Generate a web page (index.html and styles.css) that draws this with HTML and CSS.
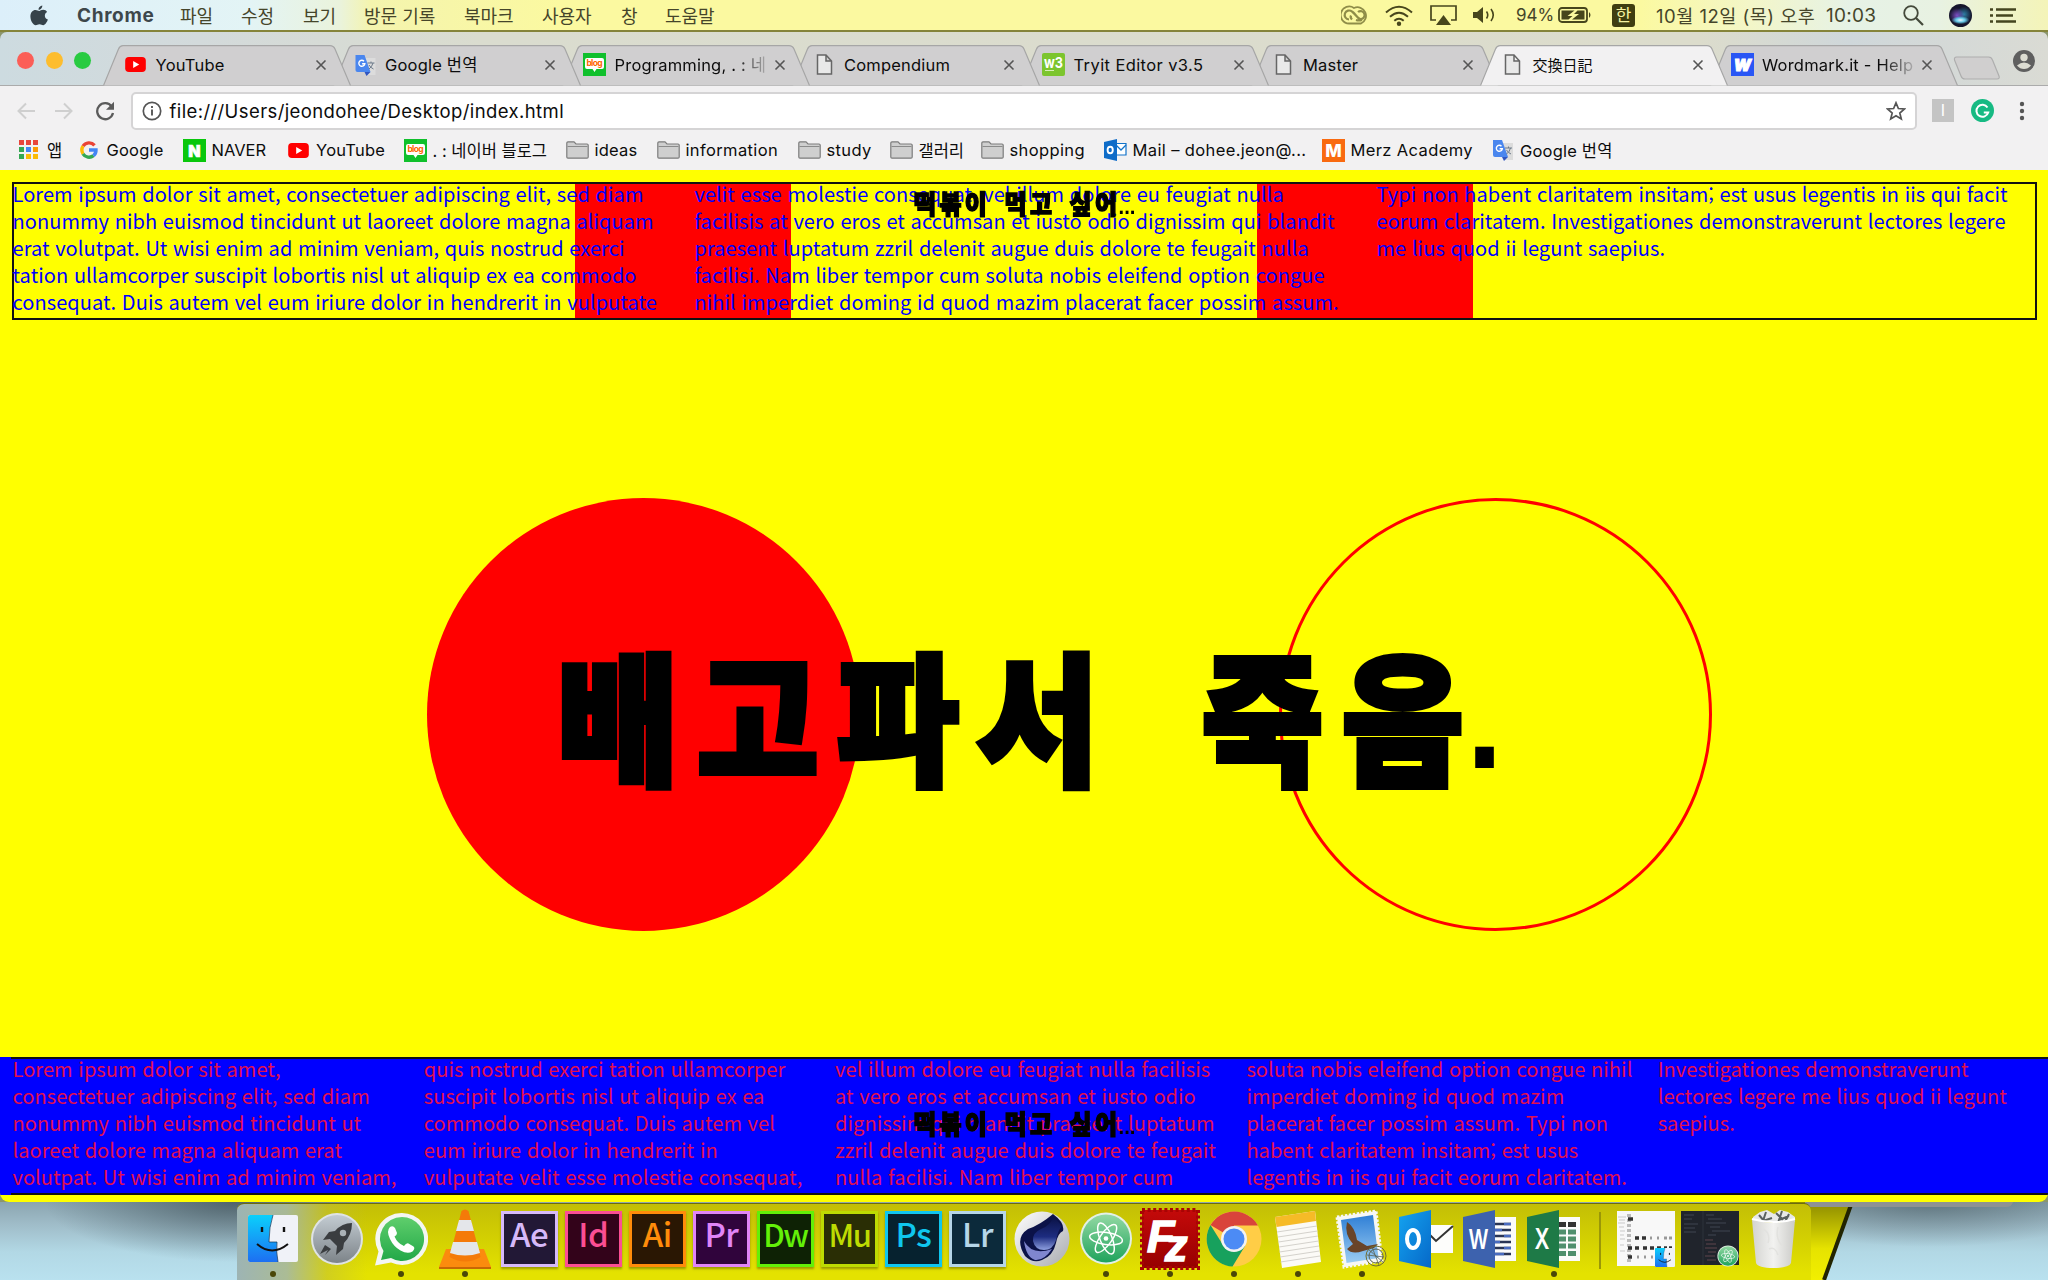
FILE: index.html
```html
<!DOCTYPE html>
<html lang="ko">
<head>
<meta charset="utf-8">
<title>交換日記</title>
<link rel="stylesheet" href="styles.css">
</head>
<body>
<svg width="0" height="0" class="defs">
  <defs>
    <symbol id="yt" viewBox="0 0 22 16"><rect width="22" height="16" rx="4" fill="#f00"/><path d="M8.5 4.2v7.6l6.5-3.8z" fill="#fff"/></symbol>
    <symbol id="translate" viewBox="0 0 22 22"><path d="M10 4h11v17h-8z" fill="#dcdcdc"/><path d="M1 1h9l6 17H3q-2 0-2-2z" fill="#4a86ee"/><path d="M10 18h6l-4 4z" fill="#2f55c0"/><path d="M13 9h7M16.500 7.500v1.500M18.500 9q-1 4-4 6M14.500 11q2 3 4.500 4" stroke="#6d7a8a" fill="none"/><path d="M9.500 7.200a3 3 0 1 0 .8 2.600H7.600" stroke="#fff" stroke-width="1.400" fill="none"/></symbol>
    <symbol id="blog" viewBox="0 0 23 23"><rect width="23" height="23" fill="#10c02c"/><path d="M4 5h15q2 0 2 2v7q0 2-2 2h-5.500l-2 3-2-3H4q-2 0-2-2V7q0-2 2-2z" fill="#fff"/><text x="11.500" y="13.300" text-anchor="middle" font-size="8.500" font-weight="700" fill="#f60" font-family="Inter, sans-serif" textLength="16">blog</text></symbol>
    <symbol id="doc" viewBox="0 0 16 21"><path d="M1 1h8.500L15 7v13H1zM9.500 1v6H15" fill="#e9e9e9" stroke="#666" stroke-width="1.500"/></symbol>
    <symbol id="folder" viewBox="0 0 23 18"><path d="M.8 16V2q0-1.200 1.200-1.200h6L10 3h11q1.200 0 1.200 1.200V16q0 1.200-1.200 1.200H2Q.8 17.200.8 16z" fill="#cfcfcf" stroke="#7c7c7c" stroke-width="1.200"/><path d="M1.500 5.500h20" stroke="#8b8b8b"/></symbol>
    <symbol id="x" viewBox="0 0 12 12"><path d="M1.500 1.500l9 9M10.500 1.500l-9 9" stroke="#555" stroke-width="1.600"/></symbol>
    <symbol id="shape" viewBox="0 0 248 41"><path d="M.5 40.500L15.500 4Q17 .6 20 .6H227Q230.500 .6 232 4L247.500 40.500"/></symbol>
    <symbol id="atom" viewBox="0 0 54 54"><circle cx="27" cy="27" r="26" fill="#e3f0e6"/><circle cx="27" cy="27" r="24" fill="url(#gAtom)"/><g fill="none" stroke="#fff" stroke-width="1.500"><ellipse cx="27" cy="27" rx="16.500" ry="6" transform="rotate(8 27 27)"/><ellipse cx="27" cy="27" rx="16.500" ry="6" transform="rotate(68 27 27)"/><ellipse cx="27" cy="27" rx="16.500" ry="6" transform="rotate(-55 27 27)"/></g><circle cx="27" cy="27" r="2.300" fill="#fff"/></symbol>
    <symbol id="finder" viewBox="0 0 50 47"><rect width="50" height="47" rx="2" fill="#f0f2f8"/><path d="M2 0h23q-4 12-4 27h8q-1 10 1 20H2q-2 0-2-2V2q0-2 2-2z" fill="url(#gFind)"/><path d="M25 0q-4 12-4 27h8q-1 10 1 20" fill="none" stroke="#135" stroke-width=".7"/><path d="M14 12v5M36 12v5" stroke="#111" stroke-width="2.400"/><path d="M9 29q15 13 31 0" fill="none" stroke="#111" stroke-width="2"/></symbol>
    <linearGradient id="gAtom" x2="0" y2="1"><stop offset="0" stop-color="#93d9a3"/><stop offset="1" stop-color="#1fa35c"/></linearGradient>
    <linearGradient id="gFind" x2="0" y2="1"><stop offset="0" stop-color="#0bd0fb"/><stop offset="1" stop-color="#1d6ff2"/></linearGradient>
    <linearGradient id="gRocket" x2="0" y2="1"><stop offset="0" stop-color="#c3ccd2"/><stop offset="1" stop-color="#7d8489"/></linearGradient>
    <linearGradient id="gWa" x2="0" y2="1"><stop offset="0" stop-color="#5fce6c"/><stop offset="1" stop-color="#22a848"/></linearGradient>
    <linearGradient id="gC4d" x2="0" y2="1"><stop offset="0" stop-color="#0a1245"/><stop offset=".6" stop-color="#1d2c80"/><stop offset="1" stop-color="#8ea0e0"/></linearGradient>
    <linearGradient id="gBall" x2="1" y2="1"><stop offset="0" stop-color="#fff"/><stop offset="1" stop-color="#a9abb0"/></linearGradient>
    <linearGradient id="gSky" x2="0" y2="1"><stop offset="0" stop-color="#2f7fd6"/><stop offset="1" stop-color="#9ccdf2"/></linearGradient>
    <linearGradient id="gOut" x2="1" y2="1"><stop offset="0" stop-color="#14a3f0"/><stop offset="1" stop-color="#0668c8"/></linearGradient>
    <linearGradient id="gTrash" x2="1" y2="0"><stop offset="0" stop-color="#d3d3d0"/><stop offset=".5" stop-color="#f2f2f0"/><stop offset="1" stop-color="#cbcbc8"/></linearGradient>
    <linearGradient id="gFz" x2="0" y2="1"><stop offset="0" stop-color="#c40a0a"/><stop offset="1" stop-color="#960000"/></linearGradient>
    <linearGradient id="gPeek" x2="0" y2="1"><stop offset="0" stop-color="#8c8a00"/><stop offset=".6" stop-color="#e6e300"/><stop offset="1" stop-color="#f2ef00"/></linearGradient>
  </defs>
</svg>

<header class="menubar">
  <svg class="apple" width="18" height="21" viewBox="0 0 18 21"><path d="M12.300.4c.2 2-1.600 4.300-3.700 4.300C8.300 2.700 10.300.6 12.300.4zM9.200 6c1 0 2.100-1.200 4-1.200 1.700 0 3.100.9 3.900 2.100-3.400 2-2.800 6.400.8 7.700-.9 2.500-2.700 5.600-4.600 5.600-1.500 0-2-.9-3.800-.9s-2.400.9-3.800.9C3.300 20.200.4 15.600.4 11.400c0-4 2.500-6.400 5-6.400C7.100 5 8.400 6 9.200 6z" fill="#36424a"/></svg>
  <b class="app">Chrome</b>
  <span>파일</span><span>수정</span><span>보기</span><span>방문 기록</span><span>북마크</span><span>사용자</span><span>창</span><span>도움말</span>
  <svg width="28" height="20" viewBox="0 0 28 20"><path d="M8 18.500A8.500 8.500 0 1 1 13 3a8.500 8.500 0 1 1 7 15.500z" fill="none" stroke="#8f8d48" stroke-width="1.800"/><path d="M8 14.500a4.500 4.500 0 1 1 3-8q2 1.500 4 4t4 3.500a4 4 0 1 0-2-7M11 14.500q-2-2-1-4M15 15q3 1 6 0" fill="none" stroke="#8f8d48" stroke-width="2.200"/></svg>
  <svg width="28" height="21" viewBox="0 0 28 21"><g fill="none" stroke="#47461c" stroke-width="2"><path d="M1 7.500q13-11.500 26 0M5 11.800q9-8 18 0M9.300 15.800q4.700-4 9.400 0"/></g><circle cx="14" cy="18.700" r="2.200" fill="#47461c"/></svg>
  <svg width="27" height="20" viewBox="0 0 27 20"><path d="M6 15H1V1h25v14h-5" fill="none" stroke="#47461c" stroke-width="1.700"/><path d="M13.500 10l7.500 10H6z" fill="#47461c"/></svg>
  <svg width="25" height="18" viewBox="0 0 25 18"><path d="M1 6h4l6-5v16l-6-5H1z" fill="#47461c"/><path d="M14.500 5.500q2.500 3.500 0 7M19 3q4.500 6 0 12" fill="none" stroke="#47461c" stroke-width="1.600"/></svg>
  <span class="pct">94%</span>
  <svg width="34" height="16" viewBox="0 0 34 16"><rect x="1" y="1" width="28" height="14" rx="3" fill="none" stroke="#47461c" stroke-width="1.800"/><path d="M3.500 3.500h13l-7 5.500h5l-4 3.500h-7zM26.500 12.500H14L21 7h-5l3.500-3.500h7z" fill="#47461c"/><path d="M31 5q3 3 0 6z" fill="#47461c"/></svg>
  <span class="ime">한</span>
  <span class="date">10월 12일 (목) 오후</span><span class="time">10:03</span>
  <svg width="21" height="21" viewBox="0 0 21 21"><circle cx="8" cy="8" r="6.800" fill="none" stroke="#44493a" stroke-width="1.800"/><path d="M13 13l7 7" stroke="#44493a" stroke-width="2.200"/></svg>
  <span class="siri"></span>
  <svg width="26" height="15" viewBox="0 0 26 15"><path d="M0 1.500h3M6 1.500h20M0 7.500h3M6 7.500h17M0 13.500h3M6 13.500h20" stroke="#44451f" stroke-width="2.400"/></svg>
</header>

<div class="browser">
  <div class="tabstrip">
    <div class="lights"><i class="red"></i><i class="amber"></i><i class="green"></i></div>
    <nav class="tabs">
      <div class="tab z7"><svg class="bg"><use href="#shape"/></svg><svg class="fav" width="21" height="15"><use href="#yt"/></svg><span class="t">YouTube</span><svg class="x"><use href="#x"/></svg></div>
      <div class="tab z6"><svg class="bg"><use href="#shape"/></svg><svg class="fav" width="22" height="22"><use href="#translate"/></svg><span class="t">Google 번역</span><svg class="x"><use href="#x"/></svg></div>
      <div class="tab z5"><svg class="bg"><use href="#shape"/></svg><svg class="fav" width="23" height="23"><use href="#blog"/></svg><span class="t fade">Programming, . : 네</span><svg class="x"><use href="#x"/></svg></div>
      <div class="tab z4"><svg class="bg"><use href="#shape"/></svg><svg class="fav" width="16" height="21"><use href="#doc"/></svg><span class="t">Compendium</span><svg class="x"><use href="#x"/></svg></div>
      <div class="tab z3"><svg class="bg"><use href="#shape"/></svg><svg class="fav" width="23" height="23" viewBox="0 0 23 23"><rect width="23" height="23" rx="2" fill="#7cc52e"/><text x="2" y="15" font-family="Inter, sans-serif" font-weight="700" font-size="15" fill="#fff" textLength="19" lengthAdjust="spacingAndGlyphs">w3</text><path d="M3 17.500h9" stroke="#d6efb5"/></svg><span class="t wide">Tryit Editor v3.5</span><svg class="x"><use href="#x"/></svg></div>
      <div class="tab z2"><svg class="bg"><use href="#shape"/></svg><svg class="fav" width="16" height="21"><use href="#doc"/></svg><span class="t">Master</span><svg class="x"><use href="#x"/></svg></div>
      <div class="tab active"><svg class="bg"><use href="#shape"/></svg><svg class="fav" width="16" height="21"><use href="#doc"/></svg><span class="t jp">交換日記</span><svg class="x"><use href="#x"/></svg></div>
      <div class="tab z1"><svg class="bg"><use href="#shape"/></svg><svg class="fav" width="23" height="23" viewBox="0 0 23 23"><rect width="23" height="23" fill="#2956f5"/><text x="11.500" y="17.500" text-anchor="middle" font-family="Inter, sans-serif" font-weight="900" font-style="italic" font-size="16" fill="#fff" stroke="#fff">W</text></svg><span class="t fade">Wordmark.it - Help</span><svg class="x"><use href="#x"/></svg></div>
    </nav>
    <svg class="newtab" width="48" height="24" viewBox="0 0 48 24"><path d="M3.500 1h32q3 0 4 3l6.500 16q1 3-2 3H12q-3 0-4-3L1.500 4Q1 1 3.500 1z" fill="#d0cfcf" stroke="#aeaeae" stroke-width="1.200"/></svg>
    <svg class="profile" width="22" height="22" viewBox="0 0 22 22"><circle cx="11" cy="11" r="11" fill="#5f5f5f"/><circle cx="11" cy="7.500" r="3.700" fill="#dcdcd2"/><path d="M4 15.500q7-6 14 0-3 3.500-7 3.500t-7-3.500z" fill="#dcdcd2"/></svg>
  </div>

  <div class="toolbar">
    <svg width="18" height="18" viewBox="0 0 18 18"><path d="M18 9H1.500M9 1.500L1.500 9 9 16.500" fill="none" stroke="#cfcfcf" stroke-width="2"/></svg>
    <svg width="18" height="18" viewBox="0 0 18 18"><path d="M0 9h16.500M9 1.500L16.500 9 9 16.500" fill="none" stroke="#cfcfcf" stroke-width="2"/></svg>
    <svg width="20" height="20" viewBox="0 0 20 20"><path d="M16.700 5.500A8 8 0 1 0 18 12" fill="none" stroke="#5b5b5b" stroke-width="2.300"/><path d="M19 .8v8h-8z" fill="#5b5b5b"/></svg>
    <div class="omnibox">
      <svg width="20" height="20" viewBox="0 0 20 20"><circle cx="10" cy="10" r="8.700" fill="none" stroke="#555" stroke-width="1.700"/><path d="M10 8.500v6M10 5v2" stroke="#555" stroke-width="1.900"/></svg>
      <span class="url">file:///Users/jeondohee/Desktop/index.html</span>
      <svg width="20" height="20" viewBox="0 0 20 20"><path d="M10 1.800l2.400 5.700 6.100.5-4.700 4 1.500 6L10 14.700 4.700 18l1.500-6-4.700-4 6.100-.5z" fill="none" stroke="#555" stroke-width="1.700"/></svg>
    </div>
    <span class="ext">I</span>
    <svg width="23" height="23" viewBox="0 0 23 23"><circle cx="11.500" cy="11.500" r="11.500" fill="#17ba83"/><path d="M16.500 8.500a6 6 0 1 0 .7 5h-4.400" fill="none" stroke="#fff" stroke-width="2"/></svg>
    <svg width="6" height="20" viewBox="0 0 6 20"><circle cx="3" cy="3" r="2.200" fill="#555"/><circle cx="3" cy="10" r="2.200" fill="#555"/><circle cx="3" cy="17" r="2.200" fill="#555"/></svg>
  </div>

  <div class="bookmarks">
    <svg width="20" height="20" viewBox="0 0 20 20"><path d="M0 0h5v5H0zM7 0h5v5H7zM14 0h5v5h-5z" fill="#e8453c"/><path d="M0 7h5v5H0z" fill="#35a853"/><path d="M7 7h5v5H7z" fill="#4285f4"/><path d="M14 7h5v5h-5z" fill="#fb9a05"/><path d="M0 14h5v5H0z" fill="#35a853"/><path d="M7 14h5v5H7zM14 14h5v5h-5z" fill="#fbbc05"/></svg><span>앱</span>
    <svg width="18" height="18" viewBox="0 0 18 18"><g fill="none" stroke-width="3.400"><path d="M14.500 4.300A7.200 7.200 0 0 0 3 5.200" stroke="#ea4335"/><path d="M3 5.200a7.300 7.300 0 0 0 0 7.600" stroke="#fbbc05"/><path d="M3 12.800a7.200 7.200 0 0 0 10.500 1.900" stroke="#34a853"/><path d="M13.500 14.700A7.200 7.200 0 0 0 16 9H9" stroke="#4285f4"/></g></svg><span class="w">Google</span>
    <svg width="23" height="23" viewBox="0 0 23 23"><rect width="23" height="23" fill="#09c70c"/><text x="11.500" y="17.500" text-anchor="middle" font-family="Inter, sans-serif" font-weight="900" font-size="16" fill="#fff" stroke="#fff" stroke-width=".6">N</text></svg><span>NAVER</span>
    <svg width="21" height="15"><use href="#yt"/></svg><span class="w">YouTube</span>
    <svg width="23" height="23"><use href="#blog"/></svg><span>. : 네이버 블로그</span>
    <svg width="23" height="18"><use href="#folder"/></svg><span class="w">ideas</span>
    <svg width="23" height="18"><use href="#folder"/></svg><span class="w2">information</span>
    <svg width="23" height="18"><use href="#folder"/></svg><span class="w2">study</span>
    <svg width="23" height="18"><use href="#folder"/></svg><span>갤러리</span>
    <svg width="23" height="18"><use href="#folder"/></svg><span class="w2">shopping</span>
    <svg width="23" height="22" viewBox="0 0 23 22"><path d="M11 4.500h11V16H11z" fill="#fff" stroke="#1273c9" stroke-width="1.200"/><path d="M12 6l5 5 5-5" fill="none" stroke="#1273c9" stroke-width="1.300"/><path d="M0 3L13 0v22L0 19z" fill="#0f6cc8"/><ellipse cx="6.200" cy="11" rx="2.600" ry="3.300" fill="none" stroke="#fff" stroke-width="1.900"/></svg><span class="w2">Mail – dohee.jeon@...</span>
    <svg width="23" height="23" viewBox="0 0 23 23"><rect width="23" height="23" fill="#f96a10"/><text x="11.500" y="17.800" text-anchor="middle" font-family="Inter, sans-serif" font-weight="800" font-size="17.500" fill="#fff">M</text></svg><span class="w2">Merz Academy</span>
    <svg width="22" height="22"><use href="#translate"/></svg><span class="w">Google 번역</span>
  </div>

  <main class="page">
    <section class="top-box">
      <i class="bar b1"></i><i class="bar b2"></i>
      <p>Lorem ipsum dolor sit amet, consectetuer adipiscing elit, sed diam<br>nonummy nibh euismod tincidunt ut laoreet dolore magna aliquam<br>erat volutpat. Ut wisi enim ad minim veniam, quis nostrud exerci<br>tation ullamcorper suscipit lobortis nisl ut aliquip ex ea commodo<br>consequat. Duis autem vel eum iriure dolor in hendrerit in vulputate</p>
      <p>velit esse molestie consequat, vel illum dolore eu feugiat nulla<br>facilisis at vero eros et accumsan et iusto odio dignissim qui blandit<br>praesent luptatum zzril delenit augue duis dolore te feugait nulla<br>facilisi. Nam liber tempor cum soluta nobis eleifend option congue<br>nihil imperdiet doming id quod mazim placerat facer possim assum.</p>
      <p>Typi non habent claritatem insitam; est usus legentis in iis qui facit<br>eorum claritatem. Investigationes demonstraverunt lectores legere<br>me lius quod ii legunt saepius.</p>
      <h2 class="craving">떡볶이 먹고 싶어<span>...</span></h2>
    </section>
    <section class="stage">
      <i class="disc"></i><i class="ring"></i>
      <h1 class="headline">배고파서 죽음<span>.</span></h1>
    </section>
    <section class="bottom-box">
      <p>Lorem ipsum dolor sit amet,<br>consectetuer adipiscing elit, sed diam<br>nonummy nibh euismod tincidunt ut<br>laoreet dolore magna aliquam erat<br>volutpat. Ut wisi enim ad minim veniam,</p>
      <p>quis nostrud exerci tation ullamcorper<br>suscipit lobortis nisl ut aliquip ex ea<br>commodo consequat. Duis autem vel<br>eum iriure dolor in hendrerit in<br>vulputate velit esse molestie consequat,</p>
      <p>vel illum dolore eu feugiat nulla facilisis<br>at vero eros et accumsan et iusto odio<br>dignissim qui blandit praesent luptatum<br>zzril delenit augue duis dolore te feugait<br>nulla facilisi. Nam liber tempor cum</p>
      <p>soluta nobis eleifend option congue nihil<br>imperdiet doming id quod mazim<br>placerat facer possim assum. Typi non<br>habent claritatem insitam; est usus<br>legentis in iis qui facit eorum claritatem.</p>
      <p>Investigationes demonstraverunt<br>lectores legere me lius quod ii legunt<br>saepius.</p>
      <h2 class="craving">떡볶이 먹고 싶어<span>...</span></h2>
    </section>
  </main>
</div>

<footer class="desktop">
  <svg class="wall" width="2048" height="78" viewBox="0 0 2048 78"><path d="M1790 0h62l-28 78h-34z" fill="url(#gPeek)"/><path d="M1852 0l-28 78" stroke="#222400" stroke-width="4"/><path d="M1805 0h208q-1 5-7 5H1805z" fill="#8e9293"/></svg>
  <div class="dock">
    <div class="app on"><svg width="50" height="47"><use href="#finder"/></svg></div>
    <div class="app"><svg width="54" height="54" viewBox="0 0 54 54"><circle cx="27" cy="27" r="26" fill="#dfe3e5"/><circle cx="27" cy="27" r="24" fill="url(#gRocket)"/><path d="M42 11q-10 0-17 8l-6 1-6 8 7-1 7 7-1 9 7-6 1-6q8-8 8-20zM15 33l-5 9 8-4-3 5 6-6z" fill="#3a3d40"/><circle cx="33" cy="21" r="3.200" fill="#a9b1b6"/></svg></div>
    <div class="app on"><svg width="54" height="54" viewBox="0 0 54 54"><path d="M28 1a26 26 0 1 1-11 49.500L1 53.500l3.500-14A26 26 0 0 1 28 1z" fill="#f4f6f2"/><path d="M28 5a22 22 0 1 1-11 41L7 48l2.500-9A22 22 0 0 1 28 5z" fill="url(#gWa)"/><path d="M16 15q3-2 5 1l2 5q0 2-2.500 3.500 3 7 9.500 9.500 2.500-3.500 4.500-2.500l5 3q2 2-1 5-5 3-12-1T16 27q-4-8 0-12z" fill="#fff"/></svg></div>
    <div class="app on"><svg width="54" height="60" viewBox="0 0 54 60"><path d="M8 40h38l7 18q0 1-2 1H3q-2 0-2-1z" fill="#fb8b0e"/><path d="M1 58h52v2H1z" fill="#c76705"/><path d="M23.500 2q3.500-3 7 0l12 46q-15 9-31 0z" fill="#f47a09"/><path d="M21 11h12l3 11H18zM15 33h24l3 11q-15 5-30 0z" fill="#e4e6ea"/></svg></div>
    <div class="app"><span class="tile ae">Ae</span></div>
    <div class="app"><span class="tile id">Id</span></div>
    <div class="app"><span class="tile ai">Ai</span></div>
    <div class="app"><span class="tile pr">Pr</span></div>
    <div class="app"><span class="tile dw">Dw</span></div>
    <div class="app"><span class="tile mu">Mu</span></div>
    <div class="app"><span class="tile ps">Ps</span></div>
    <div class="app"><span class="tile lr">Lr</span></div>
    <div class="app"><svg width="56" height="58" viewBox="0 0 56 58"><circle cx="28" cy="29" r="27.500" fill="url(#gBall)"/><path d="M39 4q12 9 10 17-5 2-7 12-3 13-14 17-9 4-17-4Q0 28 14 19q12-4 25-15z" fill="#0b1248"/><path d="M10 31q8 15 28 8-8 12-17 11-9-3-11-19z" fill="#7f86cf"/><path d="M39 7q-2 8-12 12-9 4-8 12 2 9 11 9t12-10q2-9 5-13 0-4-8-10z" fill="url(#gC4d)"/></svg></div>
    <div class="app on"><svg width="54" height="57"><use href="#atom"/></svg></div>
    <div class="app on"><svg width="60" height="62" viewBox="0 0 60 62"><rect x="2" y="2" width="56" height="58" fill="url(#gFz)" stroke="#a80404" stroke-width="4" stroke-dasharray="3 2.600"/><text x="7" y="44" font-family="'Liberation Sans', sans-serif" font-weight="700" font-style="italic" font-size="45" fill="#fff" stroke="#fff" stroke-width="1.500">F</text><text x="25" y="53" font-family="'Liberation Sans', sans-serif" font-weight="700" font-style="italic" font-size="45" fill="#fff" stroke="#fff" stroke-width="1.500">z</text></svg></div>
    <div class="app on"><svg width="56" height="58" viewBox="0 0 56 56"><circle cx="28" cy="28" r="27.500" fill="#ffcd46"/><path d="M28 28L4.500 14A27.500 27.500 0 0 1 52 14.500H28z" fill="#d9443b"/><path d="M4.500 14a27.500 27.500 0 0 0 22 41.500L39 35 17 34z" fill="#17a15d"/><circle cx="28" cy="28" r="13" fill="#f2f2f2"/><circle cx="28" cy="28" r="10.500" fill="#4c8bf5"/></svg></div>
    <div class="app on"><svg width="50" height="60" viewBox="0 0 50 60"><path d="M2 8l40-6 6 51-39 6z" fill="#fbfaf6"/><path d="M2 8l40-6 1 10L3.500 18z" fill="#f6bb27"/><path d="M4 23l40-6M5 28l39.500-6M5.500 33L45 27M6 38l39.500-6M6.500 43L46 37M7 48l39.500-6M7.500 53L47 47" stroke="#d4d2cc" stroke-width="1"/></svg></div>
    <div class="app on"><svg width="56" height="60" viewBox="0 0 56 60"><path d="M3 8l39-6 6 50-38 6z" fill="#f7f7f5" stroke="#f7f7f5" stroke-width="3" stroke-dasharray="2.500 1.500"/><path d="M7 11l32-5 5.500 43-32 5z" fill="url(#gSky)"/><path d="M13 13q8 5 10 18l10 6 11-2-4 4-11 3q-11 4-16-2l6-5q-9-10-6-22z" fill="#694429"/><circle cx="42" cy="47" r="10" fill="none" stroke="#716d31" stroke-width="1"/><circle cx="42" cy="47" r="7" fill="none" stroke="#5b6153" stroke-width="1"/><path d="M34 40l16 14M33 46l17 2M38 38l7 18" stroke="#5b6153" stroke-width=".8"/></svg></div>
    <div class="app"><svg width="56" height="58" viewBox="0 0 56 58"><path d="M28 15h27v28H28z" fill="#fdfdfb"/><path d="M30 23l8 8 17-15" fill="none" stroke="#333" stroke-width="2"/><path d="M1 7L33 0v58L1 51z" fill="url(#gOut)"/><ellipse cx="15" cy="29" rx="6" ry="9" fill="none" stroke="#fff" stroke-width="4"/></svg></div>
    <div class="app"><svg width="56" height="58" viewBox="0 0 56 58"><path d="M28 7h26v44H28z" fill="#fbfbfb"/><path d="M30 14h19M30 20h19M30 26h19M30 32h19M30 38h19M30 44h19" stroke="#2a3555" stroke-width="2.300"/><path d="M42 14h7M30 20h10M42 26h7M30 32h8M42 38h7M30 44h12" stroke="#4a6cc0" stroke-width="2.300"/><path d="M1 7L33 0v58L1 51z" fill="#3d62ae"/><text x="16.500" y="39" text-anchor="middle" font-family="Inter, sans-serif" font-weight="600" font-size="27" fill="#fff" textLength="20" lengthAdjust="spacingAndGlyphs">W</text></svg></div>
    <div class="app on"><svg width="56" height="58" viewBox="0 0 56 58"><path d="M28 7h26v44H28z" fill="#fbfbfb"/><path d="M32 22h8M32 29h8M32 36h8M32 43.500h8M42 22h8M42 29h8M42 36h8M42 43.500h8" stroke="#4f8f6d" stroke-width="5"/><path d="M32 14.500h8M42 14.500h8" stroke="#333" stroke-width="5"/><path d="M1 7L33 0v58L1 51z" fill="#1e7a47"/><text x="16" y="39" text-anchor="middle" font-family="Inter, sans-serif" font-weight="600" font-size="28" fill="#fff" textLength="15" lengthAdjust="spacingAndGlyphs">X</text></svg></div>
    <i class="sep"></i>
    <div class="app"><svg width="58" height="56" viewBox="0 0 58 56"><rect width="58" height="55" fill="#f8f8f8"/><path d="M1 6h8M2 9h6M1 12h7M2 16h5M3 20h5M3 24h4M3 28h5M3 34h4M3 40h5" stroke="#c9c9c9"/><path d="M12 3v50" stroke="#bbb" stroke-width="4" stroke-dasharray="3 2"/><path d="M11 8h5M18 27h4M25 27h4M11 37h4M18 37h4M26 37h4M33 37h4M40 37h4M47 37h3M52 37h3M11 46h4" stroke="#333" stroke-width="3.500"/><path d="M33 27h2M40 27h2M47 27h3M52 27h3M20 46h2M27 46h2M34 46h2" stroke="#999" stroke-width="3"/><svg x="38" y="37" width="20" height="19"><use href="#finder"/></svg></svg></div>
    <div class="app"><svg width="60" height="58" viewBox="0 0 60 58"><rect x="1" y="1" width="58" height="54" fill="#20242c"/><path d="M4 5h10M4 9h8M4 14h14M4 18h11M4 22h12M26 5h8M28 9h14M26 13h20M30 17h10M32 21h18M28 25h8" stroke="#3f4550"/><path d="M25 30h8M26 34h10M25 38h12M28 42h8M25 46h10M27 50h9" stroke="#5f444c"/><path d="M23 1v54" stroke="#2d323b"/><svg x="37" y="35" width="22" height="22"><use href="#atom"/></svg></svg></div>
    <div class="app"><svg width="46" height="60" viewBox="0 0 46 60"><path d="M2 8l7-5 7-2 7 4 6-4 8 2 7 5v5H2z" fill="#e7e8e8"/><path d="M8 6l5 6M15 3l-3 9 9-3M25 4l7 7M31 2l-3 9 10-4M38 5l-4 8" stroke="#59605f" stroke-width="2" fill="none"/><path d="M1 11q22 5 43 0l-4 43q-2 5-17.500 5T5 54z" fill="url(#gTrash)"/><path d="M1 10q22 6 43 0" fill="none" stroke="#fff" stroke-width="2"/><path d="M12 20q8 4 5 14M27 18q-3 12 5 20M18 40q6-3 9 6" stroke="#e2e2df" fill="none" stroke-width="1.500"/></svg></div>
  </div>
</footer>
</body>
</html>
```

FILE: styles.css
```css
* { box-sizing: border-box; }
body {
  margin: 0;
  width: 2048px;
  height: 1280px;
  overflow: hidden;
  display: flex;
  flex-direction: column;
  font-family: Inter, "Noto Sans CJK KR", sans-serif;
  color: #0c0c0c;
  background: #8c966c;
}
.defs { position: absolute; }
svg { flex: none; }

/* menu bar */
.menubar {
  height: 32px;
  flex: none;
  display: grid;
  grid-template-columns: 47px 103px 61px 62px 61px 100px 78px 79px 44px 676px 44px 45px 42px 44px 42px 54px 44px 170px 77px 46px 41px 60px;
  padding: 0 0 0 30px;
  align-items: center;
  white-space: nowrap;
  font-size: 18px;
  color: #45452a;
  border-bottom: 2px solid #85843a;
  background: linear-gradient(90deg, #dceffa 0, #e3f4f5 250px, #eaf3dc 340px, #f4f4ae 370px, #fbf9a0 560px, #fbf9a0 1640px, #f3f6c8 1750px, #e6f2e6 1850px, #e8f2e2 1940px, #f4f4b8 2048px);
}
.menubar .app { font-size: 19px; color: #3d474b; letter-spacing: .65px; }
.pct { font-size: 17px; }
.date { font-size: 18.500px; letter-spacing: .5px; }
.time { font-size: 19px; letter-spacing: .3px; }
.ime {
  width: 23px; height: 23px; border-radius: 3px;
  background: #3f3e10; color: #f5f3a0;
  font-size: 17px; line-height: 22px; text-align: center;
}
.siri {
  width: 23px; height: 23px; border-radius: 50%;
  background: radial-gradient(ellipse 9px 4px at 50% 70%, #e8f2ff 0, #63c9e8 50%, transparent 100%), radial-gradient(circle at 35% 50%, #7c4fc4 0, transparent 40%), radial-gradient(circle at 65% 45%, #2c7fa5 0, transparent 40%), #15152c;
}

/* browser window */
.browser { height: 1170px; flex: none; display: flex; flex-direction: column; border-radius: 7px 7px 9px 9px; overflow: hidden; position: relative; z-index: 1; }
.tabstrip {
  height: 54px; flex: none;
  display: flex;
  align-items: flex-end;
  padding-left: 17px;
  border-bottom: 1px solid #ababab;
  background: linear-gradient(90deg, #cddbe0 0, #d3dadb 200px, #dadccf 480px, #dcdccc 1700px, #cfd7da 1850px, #dadbd4 2048px);
}
.lights { width: 86px; height: 33px; flex: none; display: flex; gap: 11.500px; }
.lights i { width: 17px; height: 17px; border-radius: 50%; }
.red { background: #fb5e57; } .amber { background: #fdbd2e; } .green { background: #28cb41; }
.tabs { display: flex; flex: none; height: 41px; margin-bottom: -1px; }
.tab { width: 248px; margin-right: -18.500px; height: 41px; position: relative; display: flex; align-items: center; padding: 0 0 2px 21px; font-size: 16.500px; }
.bg { position: absolute; left: 0; top: 0; width: 248px; height: 41px; z-index: -1; fill: #d0cfd0; stroke: #a6a6a6; stroke-width: 1.200; }
.fav { width: 23px; }
.t { width: 154px; margin-left: 8.500px; white-space: nowrap; line-height: 26px; letter-spacing: .2px; }
.t.wide { letter-spacing: .4px; }
.t.jp { font-family: "Noto Sans CJK JP", sans-serif; font-size: 15px; letter-spacing: 0; }
.fade { -webkit-mask-image: linear-gradient(90deg, #000 120px, transparent 158px); mask-image: linear-gradient(90deg, #000 120px, transparent 158px); }
.x { width: 12px; height: 12px; margin-left: 5px; }
.z7 { z-index: 7; } .z6 { z-index: 6; } .z5 { z-index: 5; } .z4 { z-index: 4; } .z3 { z-index: 3; } .z2 { z-index: 2; } .z1 { z-index: 1; }
.tab.active { z-index: 9; }
.active .bg { fill: #f2f1f2; }
.newtab { margin: 0 0 5px 14px; }
.profile { margin: 0 0 13px 11.500px; }

.toolbar {
  height: 49px; flex: none;
  display: grid;
  grid-template-columns: 38px 40px 36px 1801px 39px 48px auto;
  align-items: center;
  padding-left: 17px;
  background: #f2f1f2;
}
.omnibox { width: 1786px; height: 38px; border: 2px solid #d5d4d5; border-radius: 5px; background: #fff; display: flex; align-items: center; padding: 0 9px; }
.url { flex: 1; margin-left: 7.500px; padding-top: 1px; font-size: 18.500px; letter-spacing: .4px; }
.ext { width: 22px; height: 23px; background: #c4c4c4; color: #fff; font-size: 16px; line-height: 23px; text-align: center; }

.bookmarks {
  height: 35px; flex: none;
  display: grid;
  grid-template-columns: 28px 33px 26.500px 76.500px 28.500px 76px 28.500px 87.500px 29px 133px 29px 62px 29px 112px 29px 63px 29px 62px 29px 94px 29px 189px 29px 141px 28.500px auto;
  align-items: center;
  padding: 0 0 5px 19px;
  background: #f2f1f2;
  white-space: nowrap;
  font-size: 16.500px;
}
.w { letter-spacing: .2px; }
.w2 { letter-spacing: .37px; }

/* page shown in the browser */
.page {
  flex: 1;
  background: #ff0;
  display: flex;
  flex-direction: column;
  font-family: "Noto Sans CJK KR", sans-serif;
  font-size: 20px;
  line-height: 27.100px;
  letter-spacing: .06px;
}
.page p { margin: 0; white-space: nowrap; }
.top-box {
  position: relative;
  height: 138px;
  margin: 12px 11px 0 11.500px;
  border: 2px solid #111;
  display: grid;
  grid-template-columns: 682px 682px 1fr;
  color: #00f;
  flex: none;
}
.top-box p { position: relative; margin: -4px 0 0 -1px; }
.bar { position: absolute; top: 0; bottom: 0; width: 216px; background: #f00; }
.b1 { left: 561px; } .b2 { left: 1243.500px; }
.stage { flex: 1; position: relative; display: flex; align-items: center; padding: 0 0 61px 427px; gap: 419px; }
.disc, .ring { width: 433px; height: 433px; border-radius: 50%; position: relative; top: 56.500px; }
.disc { background: #f00; }
.ring { border: 3px solid #f00; }
h1, h2 { margin: 0; position: absolute; white-space: nowrap; color: #000; font-weight: 900; transform-origin: 0 0; }
.headline { left: 557px; top: 321px; font-size: 142px; line-height: 1; letter-spacing: 20px; word-spacing: 31px; -webkit-text-stroke: 6px #000; transform: scaleX(.93); }
.headline span { font-family: "Liberation Sans", sans-serif; -webkit-text-stroke: 0; margin-left: -17px; position: relative; top: -6px; }
.craving { left: 900px; top: 5px; font-size: 26px; line-height: 28px; letter-spacing: 3.700px; word-spacing: 4.500px; -webkit-text-stroke: 1.500px #000; transform: scaleX(.92); }
.craving span { font: 700 22px/1 "Liberation Sans", sans-serif; letter-spacing: 0; -webkit-text-stroke: 0; margin-left: -2px; }
.bottom-box {
  position: relative;
  height: 138.500px;
  margin-bottom: 7px;
  padding: 0 0 0 12.500px;
  display: grid;
  grid-template-columns: 411.300px 411.300px 411.300px 411.300px 1fr;
  color: #e2104e;
  background: linear-gradient(#111, #111) 11px 0 / 100% 2px no-repeat, linear-gradient(#111, #111) 11px 100% / 100% 2px no-repeat, #00f;
  flex: none;
}
.bottom-box p { margin-top: -2px; }
.bottom-box .craving { left: 914px; top: 52px; }

/* desktop and dock */
.desktop {
  height: 78px; flex: none;
  position: relative;
  display: flex;
  padding-left: 237px;
  background:
    radial-gradient(ellipse 190px 60px at 235px 0, rgba(40,55,62,.6), transparent),
    radial-gradient(ellipse 180px 45px at 1930px 0, rgba(40,55,62,.45), transparent),
    linear-gradient(#8ba5b0 0, #9fbcc8 22px, #b2d8e5 50px, #b9e1ef 78px);
}
.wall { position: absolute; left: 0; top: 0; }
.dock {
  position: relative;
  width: 1574px; height: 78px;
  margin-top: 1px;
  padding-left: 4px;
  display: flex;
  border-radius: 7px 7px 0 0;
  background: linear-gradient(90deg, #9db4b4 0, rgba(165,184,165,.9) 50px, rgba(190,188,60,.5) 90px, rgba(200,198,0,0) 130px), linear-gradient(#c3be06, #d3d002 35px, #e4e200 70px);
  border-top: 1px solid #6d6b10;
}
.dock .app { width: 64.050px; height: 71px; display: flex; align-items: center; justify-content: center; position: relative; top: -1px; }
.app.on::after { content: ""; position: absolute; left: 29px; top: 68px; width: 6px; height: 6px; border-radius: 50%; background: #4a4708; }
.sep { width: 2px; height: 57px; margin: 8px 13px 0; background: #9a9708; }
.tile { width: 57px; height: 56px; border: 3px solid; display: flex; align-items: center; justify-content: center; font: 500 33px/1 "Noto Sans CJK KR", sans-serif; letter-spacing: -.5px; padding-bottom: 10px; box-shadow: 0 2px 2px rgba(90,90,0,.5); }
.dw, .mu { letter-spacing: -1.500px; }
.ae { color: #d6b9f9; background: #221836; }
.id { color: #fc4e93; background: #33031a; }
.ai { color: #ff8c0a; background: #2a1703; }
.pr { color: #e085f8; background: #30043c; }
.dw { color: #63f008; background: #0e2205; font-size: 31px; }
.mu { color: #bedb02; background: #2a2e05; font-size: 31px; }
.ps { color: #0fc6ee; background: #06222f; }
.lr { color: #b6d6e8; background: #0c2a3b; }
```
